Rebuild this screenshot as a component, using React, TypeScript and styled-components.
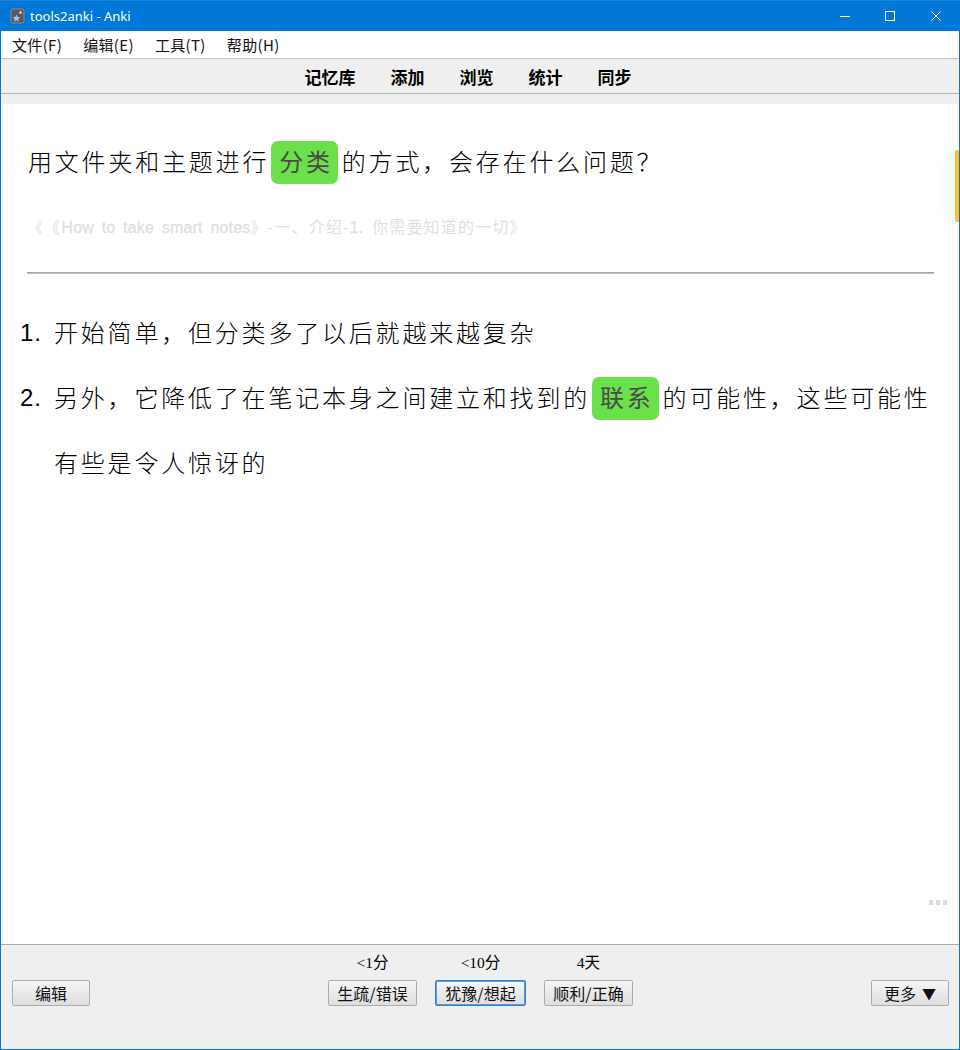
import styled, { createGlobalStyle } from 'styled-components';

const CJK = '"Noto Sans CJK SC", sans-serif';

const GlobalStyle = createGlobalStyle`
  html, body {
    margin: 0;
    padding: 0;
    background: #fff;
    overflow: hidden;
  }
`;

const menus = ['文件(F)', '编辑(E)', '工具(T)', '帮助(H)'];
const navs = ['记忆库', '添加', '浏览', '统计', '同步'];
const answers = [
  { due: '<1分', label: '生疏/错误', width: 89 },
  { due: '<10分', label: '犹豫/想起', width: 91, focused: true },
  { due: '4天', label: '顺利/正确', width: 89 },
];

function AppIcon() {
  return (
    <svg width="15" height="16" viewBox="0 0 15 16">
      <rect x="1" y="1" width="13" height="14" rx="2" fill="#5a5a5e" stroke="#8a8a8a" />
      <path d="M6.5 6.5l1.2 2.4 2.6.3-1.9 1.8.5 2.6-2.4-1.3-2.4 1.3.5-2.6-1.9-1.8 2.6-.3z" fill="#9cc4ec" />
      <path d="M10.5 2.5l.6 1.2 1.3.2-.9.9.2 1.3-1.2-.6-1.2.6.2-1.3-.9-.9 1.3-.2z" fill="#d8d8dc" />
    </svg>
  );
}

function App() {
  return (
    <Win>
      <GlobalStyle />
      <TitleBar>
        <AppIcon />
        <TitleText>tools2anki - Anki</TitleText>
        <WinButtons>
          <WinButton $first>
            <svg width="10" height="10" viewBox="0 0 10 10"><path d="M0 5.5h10" stroke="#fff" /></svg>
          </WinButton>
          <WinButton>
            <svg width="10" height="10" viewBox="0 0 10 10"><rect x=".5" y=".5" width="9" height="9" fill="none" stroke="#fff" /></svg>
          </WinButton>
          <WinButton>
            <svg width="10" height="10" viewBox="0 0 10 10"><path d="M.3.3l9.4 9.4M9.7.3L.3 9.7" stroke="#fff" /></svg>
          </WinButton>
        </WinButtons>
      </TitleBar>

      <MenuBar>
        {menus.map((m) => <MenuItem key={m}>{m}</MenuItem>)}
      </MenuBar>

      <TopBar>
        {navs.map((n) => <NavLink key={n}>{n}</NavLink>)}
      </TopBar>
      <Strip />

      <Card>
        <Question>
          用文件夹和主题进行<Chip>分类</Chip>的方式，会存在什么问题？
        </Question>
        <Source>
          《《<Latin>How to take smart notes</Latin>》-一、介绍-<Latin>1.</Latin> 你需要知道的一切》
        </Source>
        <Rule />
        <AnswerList>
          <Item>
            <Num>1.</Num>
            <ItemText>开始简单，但分类多了以后就越来越复杂</ItemText>
          </Item>
          <Item>
            <Num>2.</Num>
            <ItemText>
              另外，它降低了在笔记本身之间建立和找到的<Chip>联系</Chip>的可能性，这些可能性有些是令人惊讶的
            </ItemText>
          </Item>
        </AnswerList>
        <SideTab />
        <Dots>
          <i /><i /><i />
        </Dots>
      </Card>

      <BottomBar>
        <SideSlot>
          <Btn $width={78}>编辑</Btn>
        </SideSlot>
        <AnswerRow>
          {answers.map((a) => (
            <AnswerCol key={a.label}>
              <Due>{a.due}</Due>
              <Btn $width={a.width} $focused={a.focused}>{a.label}</Btn>
            </AnswerCol>
          ))}
        </AnswerRow>
        <SideSlot $right>
          <Btn $width={78}>更多<Arrow>▼</Arrow></Btn>
        </SideSlot>
      </BottomBar>
    </Win>
  );
}

const Win = styled.div`
  width: 960px;
  height: 1050px;
  box-sizing: border-box;
  display: flex;
  flex-direction: column;
  border: 1px solid #0078d7;
  border-top: 0;
  background: #fff;
  color: #000;
  font-family: ${CJK};
  text-spacing-trim: space-all;
`;

const TitleBar = styled.div`
  height: 31px;
  flex: none;
  margin: 0 -1px;
  padding-left: 10px;
  display: flex;
  align-items: center;
  background: #0078d7;
  box-shadow: inset 0 1px 0 #1a86dc;
`;

const TitleText = styled.span`
  margin-left: 5px;
  color: #fff;
  font-family: "Noto Sans", sans-serif;
  font-size: 13px;
`;

const WinButtons = styled.div`
  margin-left: auto;
  padding-right: 1px;
  display: flex;
`;

const WinButton = styled.div<{ $first?: boolean }>`
  box-sizing: border-box;
  width: 46px;
  height: 31px;
  padding-left: ${(p) => (p.$first ? '2px' : '0')};
  display: flex;
  align-items: center;
  justify-content: center;
`;

const MenuBar = styled.div`
  height: 27px;
  flex: none;
  padding-left: 11px;
  display: flex;
  gap: 21px;
  align-items: center;
  font-size: 15px;
  letter-spacing: .35px;
  background: #fff;
`;

const MenuItem = styled.span`
  color: #111;
`;

const TopBar = styled.div`
  height: 36px;
  flex: none;
  box-sizing: border-box;
  padding-right: 24px;
  display: flex;
  justify-content: center;
  align-items: center;
  gap: 35px;
  background: #efefef;
  border-top: 1px solid #c4c4c4;
  border-bottom: 1px solid #b4b4b4;
`;

const NavLink = styled.span`
  font-size: 17px;
  font-weight: 700;
  color: #000;
`;

const Strip = styled.div`
  height: 10px;
  flex: none;
  background: #efefef;
`;

const Card = styled.div`
  position: relative;
  flex: 1;
  padding-top: 37px;
  background: #fff;
  font-size: 24px;
  letter-spacing: 2.8px;
  font-weight: 300;
  color: #000;
`;

const Question = styled.div`
  margin-left: 27px;
  line-height: 39px;
`;

// sits on the text baseline, the extra bottom padding centres the box a bit lower than the glyphs
const Chip = styled.span`
  display: inline-block;
  margin: 0 4px 0 2px;
  padding: 0 5px 4px 8px;
  line-height: 39px;
  border-radius: 7px;
  background: #6ae04a;
  color: #4a4a4a;
  font-weight: 400;
`;

const Source = styled.div`
  margin: 32px 0 0 26px;
  height: 24px;
  line-height: 24px;
  font-family: "Liberation Sans", ${CJK};
  font-size: 16px;
  font-weight: 400;
  letter-spacing: 1.2px;
  word-spacing: 3px;
  color: #dfdfdf;
  white-space: nowrap;
`;

const Latin = styled.span`
  letter-spacing: .2px;
  -webkit-text-stroke: .3px #dfdfdf;
`;

const Rule = styled.div`
  margin: 32px 25px 0 26px;
  height: 2px;
  background: linear-gradient(#999, #ccc);
`;

const AnswerList = styled.div`
  margin-top: 25px;
  display: flex;
  flex-direction: column;
`;

const Item = styled.div`
  display: flex;
  padding-left: 19px;
  padding-right: 20px;
  line-height: 65px;
`;

const Num = styled.span`
  flex: none;
  width: 34px;
  height: 65px;
  font-family: "Liberation Sans", sans-serif;
  font-size: 24px;
  line-height: 67px;
  letter-spacing: 1px;
  color: #000;
`;

const ItemText = styled.div`
  flex: 1;
`;

const SideTab = styled.div`
  position: absolute;
  top: 46px;
  right: 0;
  width: 4px;
  height: 72px;
  border-radius: 2px 0 0 2px;
  background: #ffc22e;
  box-shadow: -4px 0 14px rgba(0, 0, 0, .1);
`;

const Dots = styled.div`
  position: absolute;
  right: 12px;
  top: 796px;
  display: flex;
  gap: 3px;

  i {
    width: 4px;
    height: 5px;
    background: #dcdcdc;
  }
`;

const BottomBar = styled.div`
  height: 105px;
  flex: none;
  box-sizing: border-box;
  padding: 0 10px 43px 11px;
  display: grid;
  grid-template-columns: 1fr auto 1fr;
  align-items: end;
  background: #efefef;
  border-top: 1px solid #aaa;
`;

const SideSlot = styled.div<{ $right?: boolean }>`
  display: flex;
  justify-content: ${(p) => (p.$right ? 'flex-end' : 'flex-start')};
`;

const AnswerRow = styled.div`
  display: flex;
  gap: 18px;
  align-items: flex-end;
`;

const AnswerCol = styled.div`
  display: flex;
  flex-direction: column;
  align-items: center;
  gap: 7px;
`;

const Due = styled.span`
  font-family: "Liberation Serif", ${CJK};
  font-size: 15.5px;
  line-height: 20px;
  color: #000;
`;

const Btn = styled.div<{ $width: number; $focused?: boolean }>`
  box-sizing: border-box;
  width: ${(p) => p.$width}px;
  height: 26px;
  display: flex;
  align-items: center;
  justify-content: center;
  font-size: 16px;
  color: #111;
  white-space: nowrap;
  border: 1px solid ${(p) => (p.$focused ? '#2a7fd0' : '#adadad')};
  box-shadow: ${(p) => (p.$focused ? 'inset 0 0 0 1px #5a9ddc' : 'none')};
  border-radius: 2px;
  background: linear-gradient(#f6f6f6, #dedede);
`;

const Arrow = styled.span`
  margin-left: 6px;
  font-size: 14px;
`;

export default App;
